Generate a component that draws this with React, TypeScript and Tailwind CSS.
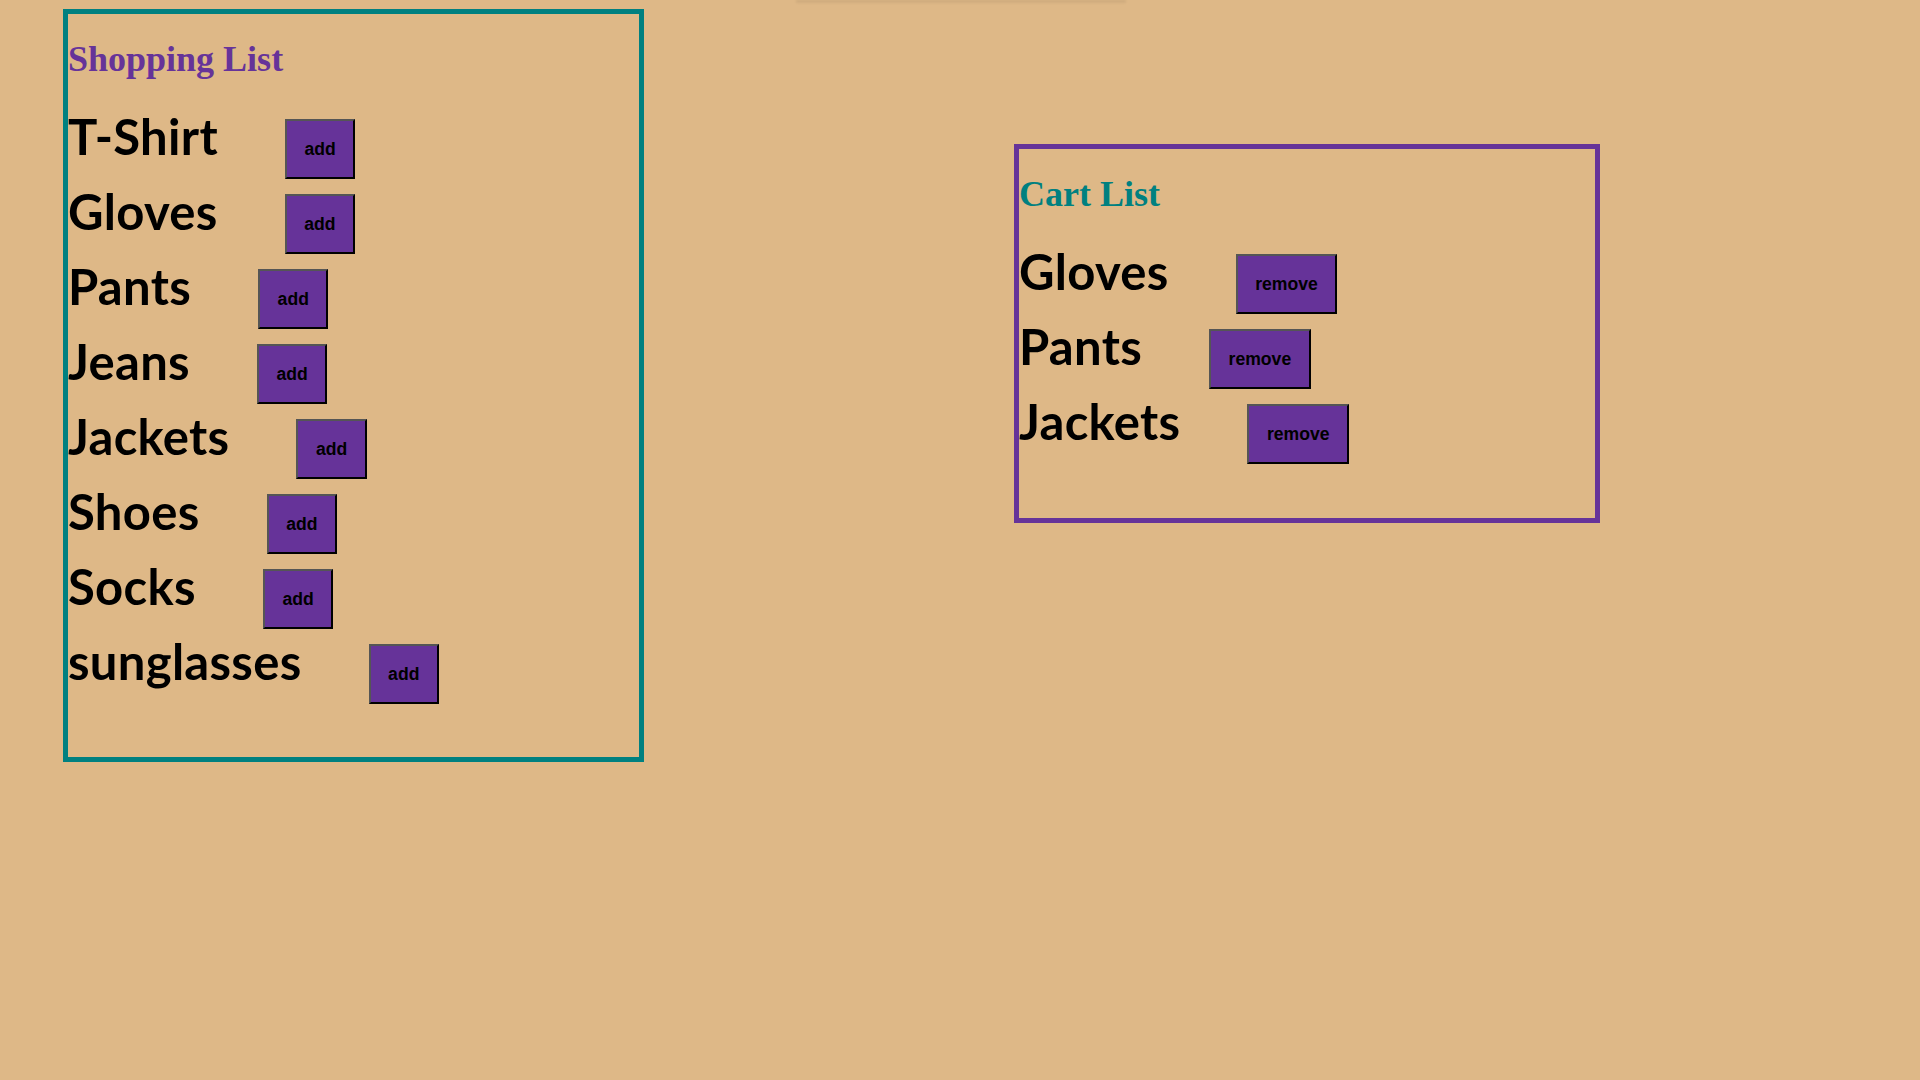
import {useState} from "react";

const products = ["T-Shirt", "Gloves", "Pants", "Jeans", "Jackets", "Shoes", "Socks", "sunglasses"];

type RowProps = {
  label: string;
  action: string;
  onClick: () => void;
};

function ItemRow({label, action, onClick}: RowProps) {
  return (
    <div className="flex h-[75px] items-baseline">
      <span className="font-['Lato',sans-serif] text-[49px] font-bold leading-[54px] tracking-[0.3px] text-black">{label}</span>
      <button
        onClick={onClick}
        className="ml-[67px] border-2 border-b-black border-l-[#555] border-r-black border-t-[#555] bg-[#663399] p-[17.6px] font-['Liberation_Sans',Arial,sans-serif] text-[17.6px] leading-[20px] font-bold text-black"
      >
        {action}
      </button>
    </div>
  );
}

export default function App() {
  const [cart, setCart] = useState<string[]>(["Gloves", "Pants", "Jackets"]);

  const add = (item: string) => setCart((current) => (current.includes(item) ? current : [...current, item]));
  const remove = (item: string) => setCart((current) => current.filter((c) => c !== item));

  return (
    <div className="relative min-h-screen bg-[#deb887]">
      {/* faint shadow along the top edge */}
      <div className="pointer-events-none absolute left-[796px] top-0 h-[4px] w-[330px] bg-gradient-to-b from-black/10 to-transparent blur-[1px]" />

      <div className="flex items-start">
        <section className="ml-[63px] mt-[9px] w-[581px] border-[5px] border-[#008080] pb-[48px]">
          <h1 className="mt-[25px] mb-[29px] font-['Liberation_Serif','Times_New_Roman',serif] text-[36px] leading-[41px] font-bold text-[#663399]">
            Shopping List
          </h1>
          {products.map((item) => (
            <ItemRow key={item} label={item} action="add" onClick={() => add(item)} />
          ))}
        </section>

        <section className="ml-[370px] mt-[144px] w-[586px] border-[5px] border-[#663399] pb-[49px]">
          <h1 className="mt-[25px] mb-[29px] font-['Liberation_Serif','Times_New_Roman',serif] text-[36px] leading-[41px] font-bold text-[#008080]">
            Cart List
          </h1>
          {cart.map((item) => (
            <ItemRow key={item} label={item} action="remove" onClick={() => remove(item)} />
          ))}
        </section>
      </div>
    </div>
  );
}
